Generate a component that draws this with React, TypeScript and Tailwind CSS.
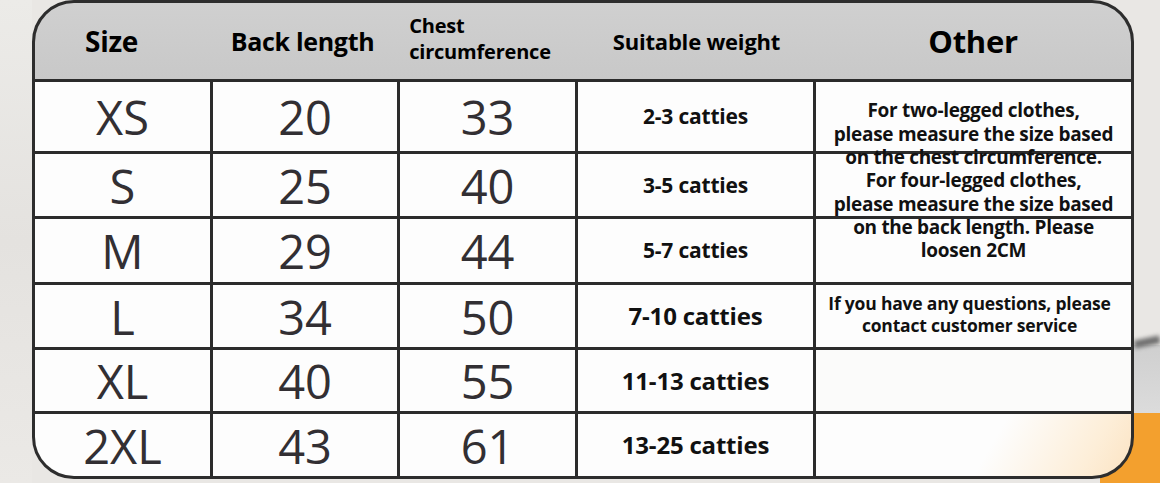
import React from "react";

const rows = [
  { size: "XS", back: "20", chest: "33", weight: "2-3 catties", big: false },
  { size: "S", back: "25", chest: "40", weight: "3-5 catties", big: false },
  { size: "M", back: "29", chest: "44", weight: "5-7 catties", big: false },
  { size: "L", back: "34", chest: "50", weight: "7-10 catties", big: true },
  { size: "XL", back: "40", chest: "55", weight: "11-13 catties", big: true },
  { size: "2XL", back: "43", chest: "61", weight: "13-25 catties", big: true },
];

const font = { fontFamily: '"Open Sans", "Noto Sans", sans-serif' };

function NumCell({ children }: { children: React.ReactNode }) {
  return (
    <div className="bg-[#fdfdfd] flex items-center justify-center text-[47px] leading-none font-normal text-[#322f33] pt-[2px]">
      {children}
    </div>
  );
}

const otherLines = [
  "For two-legged clothes,",
  "please measure the size based",
  "on the chest circumference.",
  "For four-legged clothes,",
  "please measure the size based",
  "on the back length. Please",
  "loosen 2CM",
];

export default function App() {
  return (
    <div
      className="relative w-[1160px] h-[483px] overflow-hidden bg-[#e9e7e4]"
      style={font}
    >
      {/* background decoration */}
      <div className="absolute right-0 top-[345px] w-[30px] h-[70px] bg-[linear-gradient(180deg,#cfcfcf,#dcdcdc)]" />
      <div className="absolute right-0 top-[338px] w-[26px] h-[8px] bg-[#6f6f6f] blur-[2px] -rotate-12" />
      <div className="absolute right-0 bottom-0 w-[60px] h-[70px] bg-[#f3a02e]" />
      <div className="absolute left-0 top-0 w-[32px] h-full bg-[linear-gradient(180deg,#ecebe8,#e4e2df_50%,#ebe9e6)]" />

      <div className="relative ml-[32px] w-[1102px] h-[479px] border-[3px] border-[#2d2d2d] rounded-[42px] overflow-hidden flex flex-col bg-[#2b2b2b]">
        {/* header */}
        <div className="h-[76px] shrink-0 bg-[linear-gradient(180deg,#d0d0d0,#c8c8c8)] grid grid-cols-[175px_187px_178px_238px_318px] items-center text-black font-bold">
          <div className="flex justify-center pr-[22px] text-[28px] leading-none tracking-[-0.3px]">
            Size
          </div>
          <div className="flex justify-center text-[25px] leading-none tracking-[-0.3px] pr-[2px]">
            Back length
          </div>
          <div className="flex justify-center text-[20px] leading-[26px] tracking-[-0.2px] pb-[4px] pr-[12px]">
            <div className="text-left">
              <div>Chest</div>
              <div>circumference</div>
            </div>
          </div>
          <div className="flex justify-center text-[22px] leading-none tracking-[-0.2px] pl-[5px]">
            Suitable weight
          </div>
          <div className="flex justify-center text-[31px] leading-none tracking-[-0.3px] pl-[2px]">
            Other
          </div>
        </div>

        {/* body */}
        <div className="mt-[3px] grid grid-cols-[175px_184px_175px_235px_315px] grid-rows-[69px_62px_63px_62px_61px_62px] gap-[3px]">
          {rows.map((r, i) => (
            <React.Fragment key={r.size}>
              <NumCell>{r.size}</NumCell>
              <NumCell>{r.back}</NumCell>
              <NumCell>{r.chest}</NumCell>
              <div
                className={
                  "bg-[#fdfdfd] flex items-center justify-center font-bold text-[#111] leading-none tracking-[-0.2px] " +
                  (r.big ? "text-[24px]" : "text-[21px]")
                }
              >
                {r.weight}
              </div>
              {i === 0 && (
                <div className="row-span-3 relative bg-[#fdfdfd] flex items-center justify-center">
                  <div className="absolute left-0 right-0 top-[69px] h-[3px] bg-[#2b2b2b]" />
                  <div className="absolute left-0 right-0 top-[134px] h-[3px] bg-[#2b2b2b]" />
                  <div className="relative flex flex-col items-center font-bold text-[19px] leading-[23.3px] text-[#111] tracking-[-0.3px] pb-[2px]">
                    {otherLines.map((l, k) => (
                      <div key={k} className="h-[23.3px]">
                        {l}
                      </div>
                    ))}
                  </div>
                </div>
              )}
              {i === 3 && (
                <div className="bg-[#fdfdfd] flex flex-col items-center justify-center text-center font-bold text-[17.5px] leading-[22px] text-[#111] tracking-[-0.2px] pr-[8px] pb-[4px]">
                  <div>If you have any questions, please</div>
                  <div>contact customer service</div>
                </div>
              )}
              {i === 4 && <div className="bg-[#fbfbfa]" />}
              {i === 5 && (
                <div className="bg-[linear-gradient(120deg,#fdfdfd_55%,#fdeed8_85%,#fbe3c2)]" />
              )}
            </React.Fragment>
          ))}
        </div>
      </div>
    </div>
  );
}
